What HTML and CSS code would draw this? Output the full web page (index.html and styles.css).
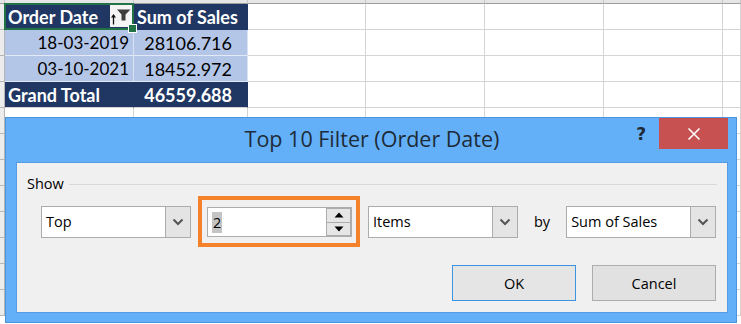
FILE: index.html
```html
<!DOCTYPE html>
<html>
<head>
<meta charset="utf-8">
<link rel="stylesheet" href="styles.css">
</head>
<body>
<div class="sheet">
  <div class="grid">
    <div class="corner"></div><div class="ch"></div><div class="ch"></div><div class="ch"></div><div class="ch"></div><div class="ch"></div><div class="ch"></div><div class="ch"></div>

    <div class="rh"></div>
    <div class="c hd sel"><span class="lbl">Order Date</span>
      <span class="fbtn"><svg width="22" height="22" viewBox="0 0 22 22"><path d="M3.5 19.5 V10.5" stroke="#111" stroke-width="1.3" fill="none"/><path d="M1 12.5 L3.5 9 L6 12.5 Z" fill="#111"/><path d="M7 4.5 H20.5 L15.5 9.5 V15.5 H11.5 V9.5 Z" fill="#3d3d3d"/></svg></span>
    </div>
    <div class="c hd">Sum of Sales</div>
    <div class="c"></div><div class="c"></div><div class="c"></div><div class="c"></div><div class="c"></div>

    <div class="rh"></div>
    <div class="c dt num date">18-03-2019</div>
    <div class="c dt num val">28106.716</div>
    <div class="c"></div><div class="c"></div><div class="c"></div><div class="c"></div><div class="c"></div>

    <div class="rh"></div>
    <div class="c dt num date">03-10-2021</div>
    <div class="c dt num val">18452.972</div>
    <div class="c"></div><div class="c"></div><div class="c"></div><div class="c"></div><div class="c"></div>

    <div class="rh"></div>
    <div class="c gt">Grand Total</div>
    <div class="c gt num val">46559.688</div>
    <div class="c"></div><div class="c"></div><div class="c"></div><div class="c"></div><div class="c"></div>

    <div class="rh"></div><div class="c"></div><div class="c"></div><div class="c"></div><div class="c"></div><div class="c"></div><div class="c"></div><div class="c"></div>
    <div class="rh"></div><div class="c"></div><div class="c"></div><div class="c"></div><div class="c"></div><div class="c"></div><div class="c"></div><div class="c"></div>
    <div class="rh"></div><div class="c"></div><div class="c"></div><div class="c"></div><div class="c"></div><div class="c"></div><div class="c"></div><div class="c"></div>
    <div class="rh"></div><div class="c"></div><div class="c"></div><div class="c"></div><div class="c"></div><div class="c"></div><div class="c"></div><div class="c"></div>
    <div class="rh"></div><div class="c"></div><div class="c"></div><div class="c"></div><div class="c"></div><div class="c"></div><div class="c"></div><div class="c"></div>
    <div class="rh"></div><div class="c"></div><div class="c"></div><div class="c"></div><div class="c"></div><div class="c"></div><div class="c"></div><div class="c"></div>
    <div class="rh"></div><div class="c"></div><div class="c"></div><div class="c"></div><div class="c"></div><div class="c"></div><div class="c"></div><div class="c"></div>
    <div class="rh"></div><div class="c"></div><div class="c"></div><div class="c"></div><div class="c"></div><div class="c"></div><div class="c"></div><div class="c"></div>
  </div>

  <div class="dialog">
    <div class="titlebar">
      <div class="tb-side"></div>
      <div class="title">Top 10 Filter (Order Date)</div>
      <div class="tb-side tb-right">
        <span class="help">?</span>
        <span class="close"><svg width="14" height="14" viewBox="0 0 14 14"><path d="M1.5 1.5 L12.5 12.5 M12.5 1.5 L1.5 12.5" stroke="#fff" stroke-width="1.6" fill="none"/></svg></span>
      </div>
    </div>
    <div class="content">
      <div class="group-head"><span class="group-label">Show</span><span class="group-line"></span></div>
      <div class="controls">
        <div class="combo"><span class="combo-text">Top</span><span class="combo-btn"><svg width="12" height="8" viewBox="0 0 12 8"><path d="M1.5 1.5 L6 6 L10.5 1.5" stroke="#555" stroke-width="2" fill="none"/></svg></span></div>
        <div class="highlight">
          <div class="spin">
            <span class="spin-text"><span class="selected">2</span></span>
            <span class="spin-btns">
              <span class="spin-btn"><svg width="10" height="6" viewBox="0 0 10 6"><path d="M0.5 5.5 L5 0.5 L9.5 5.5 Z" fill="#000"/></svg></span>
              <span class="spin-btn"><svg width="10" height="6" viewBox="0 0 10 6"><path d="M0.5 0.5 L5 5.5 L9.5 0.5 Z" fill="#000"/></svg></span>
            </span>
          </div>
        </div>
        <div class="combo"><span class="combo-text">Items</span><span class="combo-btn"><svg width="12" height="8" viewBox="0 0 12 8"><path d="M1.5 1.5 L6 6 L10.5 1.5" stroke="#555" stroke-width="2" fill="none"/></svg></span></div>
        <span class="by">by</span>
        <div class="combo"><span class="combo-text">Sum of Sales</span><span class="combo-btn"><svg width="12" height="8" viewBox="0 0 12 8"><path d="M1.5 1.5 L6 6 L10.5 1.5" stroke="#555" stroke-width="2" fill="none"/></svg></span></div>
      </div>
      <div class="buttons">
        <button class="btn btn-ok">OK</button>
        <button class="btn">Cancel</button>
      </div>
    </div>
  </div>
</div>
</body>
</html>
```
FILE: styles.css
```css
* { box-sizing: border-box; }
html, body { margin: 0; padding: 0; background: #fff; }
body { width: 741px; height: 324px; overflow: hidden; }

.sheet {
  position: relative;
  width: 741px;
  height: 324px;
  overflow: hidden;
  font-family: Lato, "Liberation Sans", sans-serif;
}

.grid {
  display: grid;
  grid-template-columns: 5px 129px 114px 118px 119px 119px 119px 1fr;
  grid-template-rows: 4px;
  grid-auto-rows: 26px;
}

.corner, .ch {
  background: #e6e6e6;
  border-bottom: 1px solid #9e9e9e;
  border-right: 1px solid #c8c8c8;
}
.rh {
  background: #ececec;
  border-right: 1px solid #b5b5b5;
  border-bottom: 1px solid #b5b5b5;
}

.c {
  border-right: 1px solid #d4d4d4;
  border-bottom: 1px solid #d4d4d4;
  display: flex;
  align-items: center;
  padding: 0 3px;
  font-size: 18px;
  white-space: nowrap;
}

.hd {
  background: #203764;
  color: #fff;
  font-weight: 700;
  border-right-color: #203764;
  border-bottom-color: #203764;
}
.dt {
  background: #b4c6e7;
  color: #000;
  border-right-color: #d9e1f2;
  border-bottom-color: #e3e9f5;
}
.gt {
  background: #203764;
  color: #fff;
  font-weight: 700;
  border-right-color: #203764;
}
.num { justify-content: flex-end; padding-right: 4px; }
.date { font-size: 17px; }
.val { padding-right: 15px; }

.sel { position: relative; padding-right: 1px; }
.sel::after {
  content: "";
  position: absolute;
  left: -1px; top: -1px; right: -1px; bottom: -1px;
  border: 2px solid #217346;
  pointer-events: none;
}
.sel::before {
  content: "";
  position: absolute;
  right: -4px; bottom: -4px;
  width: 7px; height: 7px;
  background: #217346;
  border: 1px solid #fff;
  z-index: 2;
}
.lbl { flex: 1; }
.fbtn {
  width: 22px; height: 22px;
  margin-top: -2px;
  background: #f4f4f4;
  display: flex;
}

/* dialog */
.dialog {
  position: absolute;
  left: 5px; top: 117px;
  width: 732px; height: 206px;
  background: #63b0f9;
  border: 1px solid #4a95e0;
  padding: 0 8px 9px 10px;
  display: flex;
  flex-direction: column;
  font-family: "Open Sans", "Noto Sans", sans-serif;
  color: #000;
}
.titlebar {
  height: 44px;
  display: grid;
  grid-template-columns: 1fr auto 1fr;
  align-items: start;
}
.title {
  font-size: 21.5px;
  color: #1e2b38;
  padding-top: 6px;
  white-space: nowrap;
}
.tb-right {
  display: flex;
  justify-content: flex-end;
  align-items: center;
  height: 31px;
}
.help {
  font-size: 17px;
  font-weight: 700;
  color: #1f2a36;
  margin-right: 13px;
  margin-top: 1px;
  font-family: "DejaVu Sans", sans-serif;
}
.close {
  width: 69px; height: 31px;
  background: #c75050;
  display: flex;
  align-items: center;
  justify-content: center;
}

.content {
  flex: 1;
  background: #f0f0f0;
  border: 1px solid #559ce2;
  padding: 11px 0 11px 10px;
  display: flex;
  flex-direction: column;
  font-size: 14.5px;
}
.group-head {
  height: 20px;
  display: flex;
  align-items: center;
}
.group-label { line-height: 20px; }
.group-line {
  flex: 1;
  height: 1px;
  background: #d9d9d9;
  margin: 1px 10px 0 5px;
}

.controls {
  margin-top: 2px;
  height: 51px;
  display: flex;
  align-items: center;
  padding-left: 14px;
}
.combo {
  width: 150px; height: 32px;
  background: #fff;
  border: 1px solid #acacac;
  display: flex;
  align-items: center;
}
.combo-text { flex: 1; padding-left: 4px; }
.combo-btn {
  width: 26px; height: 32px;
  margin: -1px -1px -1px 0;
  background: #e4e4e4;
  border: 1px solid #acacac;
  display: flex;
  align-items: center;
  justify-content: center;
}
.highlight {
  margin: 0 8px 0 7px;
  width: 162px; height: 51px;
  border: 4px solid #f5822a;
  padding: 7px 4px 6px 5px;
}
.spin {
  height: 30px;
  background: #fff;
  border: 1px solid #adadad;
  display: flex;
  align-items: center;
}
.spin-text { flex: 1; padding-left: 4px; }
.selected { background: #c4c4c4; padding: 1px 1px; }
.spin-btns {
  width: 25px; height: 28px;
  display: flex;
  flex-direction: column;
}
.spin-btn {
  flex: 1;
  background: #e6e6e6;
  border: 1px solid #acacac;
  display: flex;
  align-items: center;
  justify-content: center;
}
.spin-btn + .spin-btn { border-top: 0; }
.by { margin: 0 16px; }

.buttons {
  margin-top: 18px;
  display: flex;
  justify-content: flex-end;
  gap: 16px;
  padding-right: 11px;
}
.btn {
  width: 124px; height: 36px;
  font-family: "Open Sans", "Noto Sans", sans-serif;
  font-size: 14.5px;
  color: #000;
  background: #e1e1e1;
  border: 1px solid #adadad;
  padding: 0;
}
.btn-ok { border-color: #3c93e0; background: #e5e5e5; }
```
